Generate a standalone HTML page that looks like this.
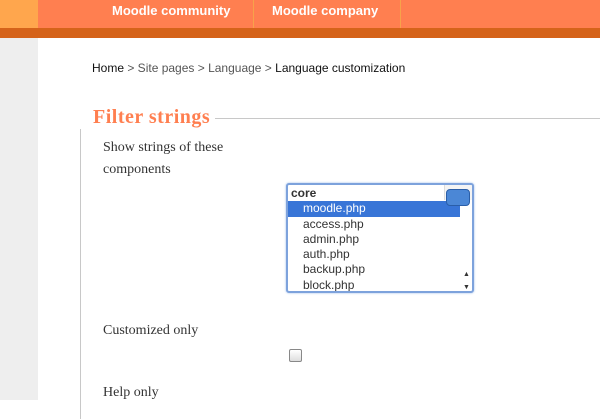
<!DOCTYPE html>
<html><head><style>
body{margin:0;width:600px;height:400px;overflow:hidden;background:#fff;font-family:"Liberation Sans",sans-serif;position:relative}
.top{position:absolute;left:0;top:0;width:600px;height:28px;background:#ff7f50}
.topl{position:absolute;left:0;top:0;width:38px;height:28px;background:#ffa64d}
.stripe{position:absolute;left:0;top:28px;width:600px;height:10px;background:#d5631a}
.side{position:absolute;left:0;top:38px;width:38px;height:362px;background:#eee}
.nav{position:absolute;top:3px;color:#fff;font-weight:bold;font-size:13px}
.sep{position:absolute;top:0;width:1px;height:28px;background:#f7a24a}
.bc{position:absolute;left:92px;top:61px;font-size:12px;color:#111}
.bc span{color:#555}
.fs{position:absolute;left:80px;top:118px;width:540px;height:300px;border-left:1px solid #c8c8c8;border-top:1px solid #c8c8c8}
.lg{position:absolute;left:93px;top:106px;background:#fff;padding:0 5px 0 14px;margin-left:-14px;color:#ff7f50;font:bold 20px "Liberation Serif",serif;letter-spacing:0.5px}
.lbl{position:absolute;left:103px;font:14px "Liberation Serif",serif;color:#333;line-height:22px}
.sel{position:absolute;left:286px;top:183px;width:184px;height:106px;border:2px solid #7da2dc;border-radius:3px;box-shadow:0 0 2px #9bbbe8;background:#fff;font-size:12px;color:#333;overflow:hidden}
.sel div{height:15.3px;line-height:15px;padding-left:15px}
.sel .g{font-weight:bold;padding-left:3px;margin-top:1px}
.sel .s{background:#3875d7;color:#fff;margin-right:12px}
.sb{position:absolute;right:0;top:0;width:12px;height:106px;background:#f4f4f4;border-left:1px solid #ddd}
.th{position:absolute;right:2px;top:4px;width:7px;height:16px;border-radius:4px;background:#4b87d6;border:1px solid #2a5ea8}
.cb{position:absolute;left:289px;top:349px;width:11px;height:11px;border:1px solid #888;border-radius:2px;background:linear-gradient(#fff,#ddd)}
</style></head><body>
<div class="top"></div><div class="topl"></div>
<div class="nav" style="left:112px">Moodle community</div>
<div class="sep" style="left:253px"></div>
<div class="nav" style="left:272px">Moodle company</div>
<div class="sep" style="left:400px"></div>
<div class="stripe"></div><div class="side"></div>
<div class="bc">Home <span>&gt; Site pages &gt; Language &gt;</span> Language customization</div>
<div class="fs"></div>
<div class="lg">Filter strings</div>
<div class="lbl" style="top:137px">Show strings of these<br>components</div>
<div class="sel">
<div class="g">core</div>
<div class="s">moodle.php</div>
<div>access.php</div><div>admin.php</div><div>auth.php</div><div>backup.php</div><div>block.php</div>
<div class="sb"><div class="th"></div><div style="position:absolute;left:3px;top:82px;font-size:7px">▲</div><div style="position:absolute;left:3px;top:95px;font-size:7px">▼</div></div>
</div>
<div class="lbl" style="top:320px">Customized only</div>
<div class="cb"></div>
<div class="lbl" style="top:382px">Help only</div>
</body></html>
